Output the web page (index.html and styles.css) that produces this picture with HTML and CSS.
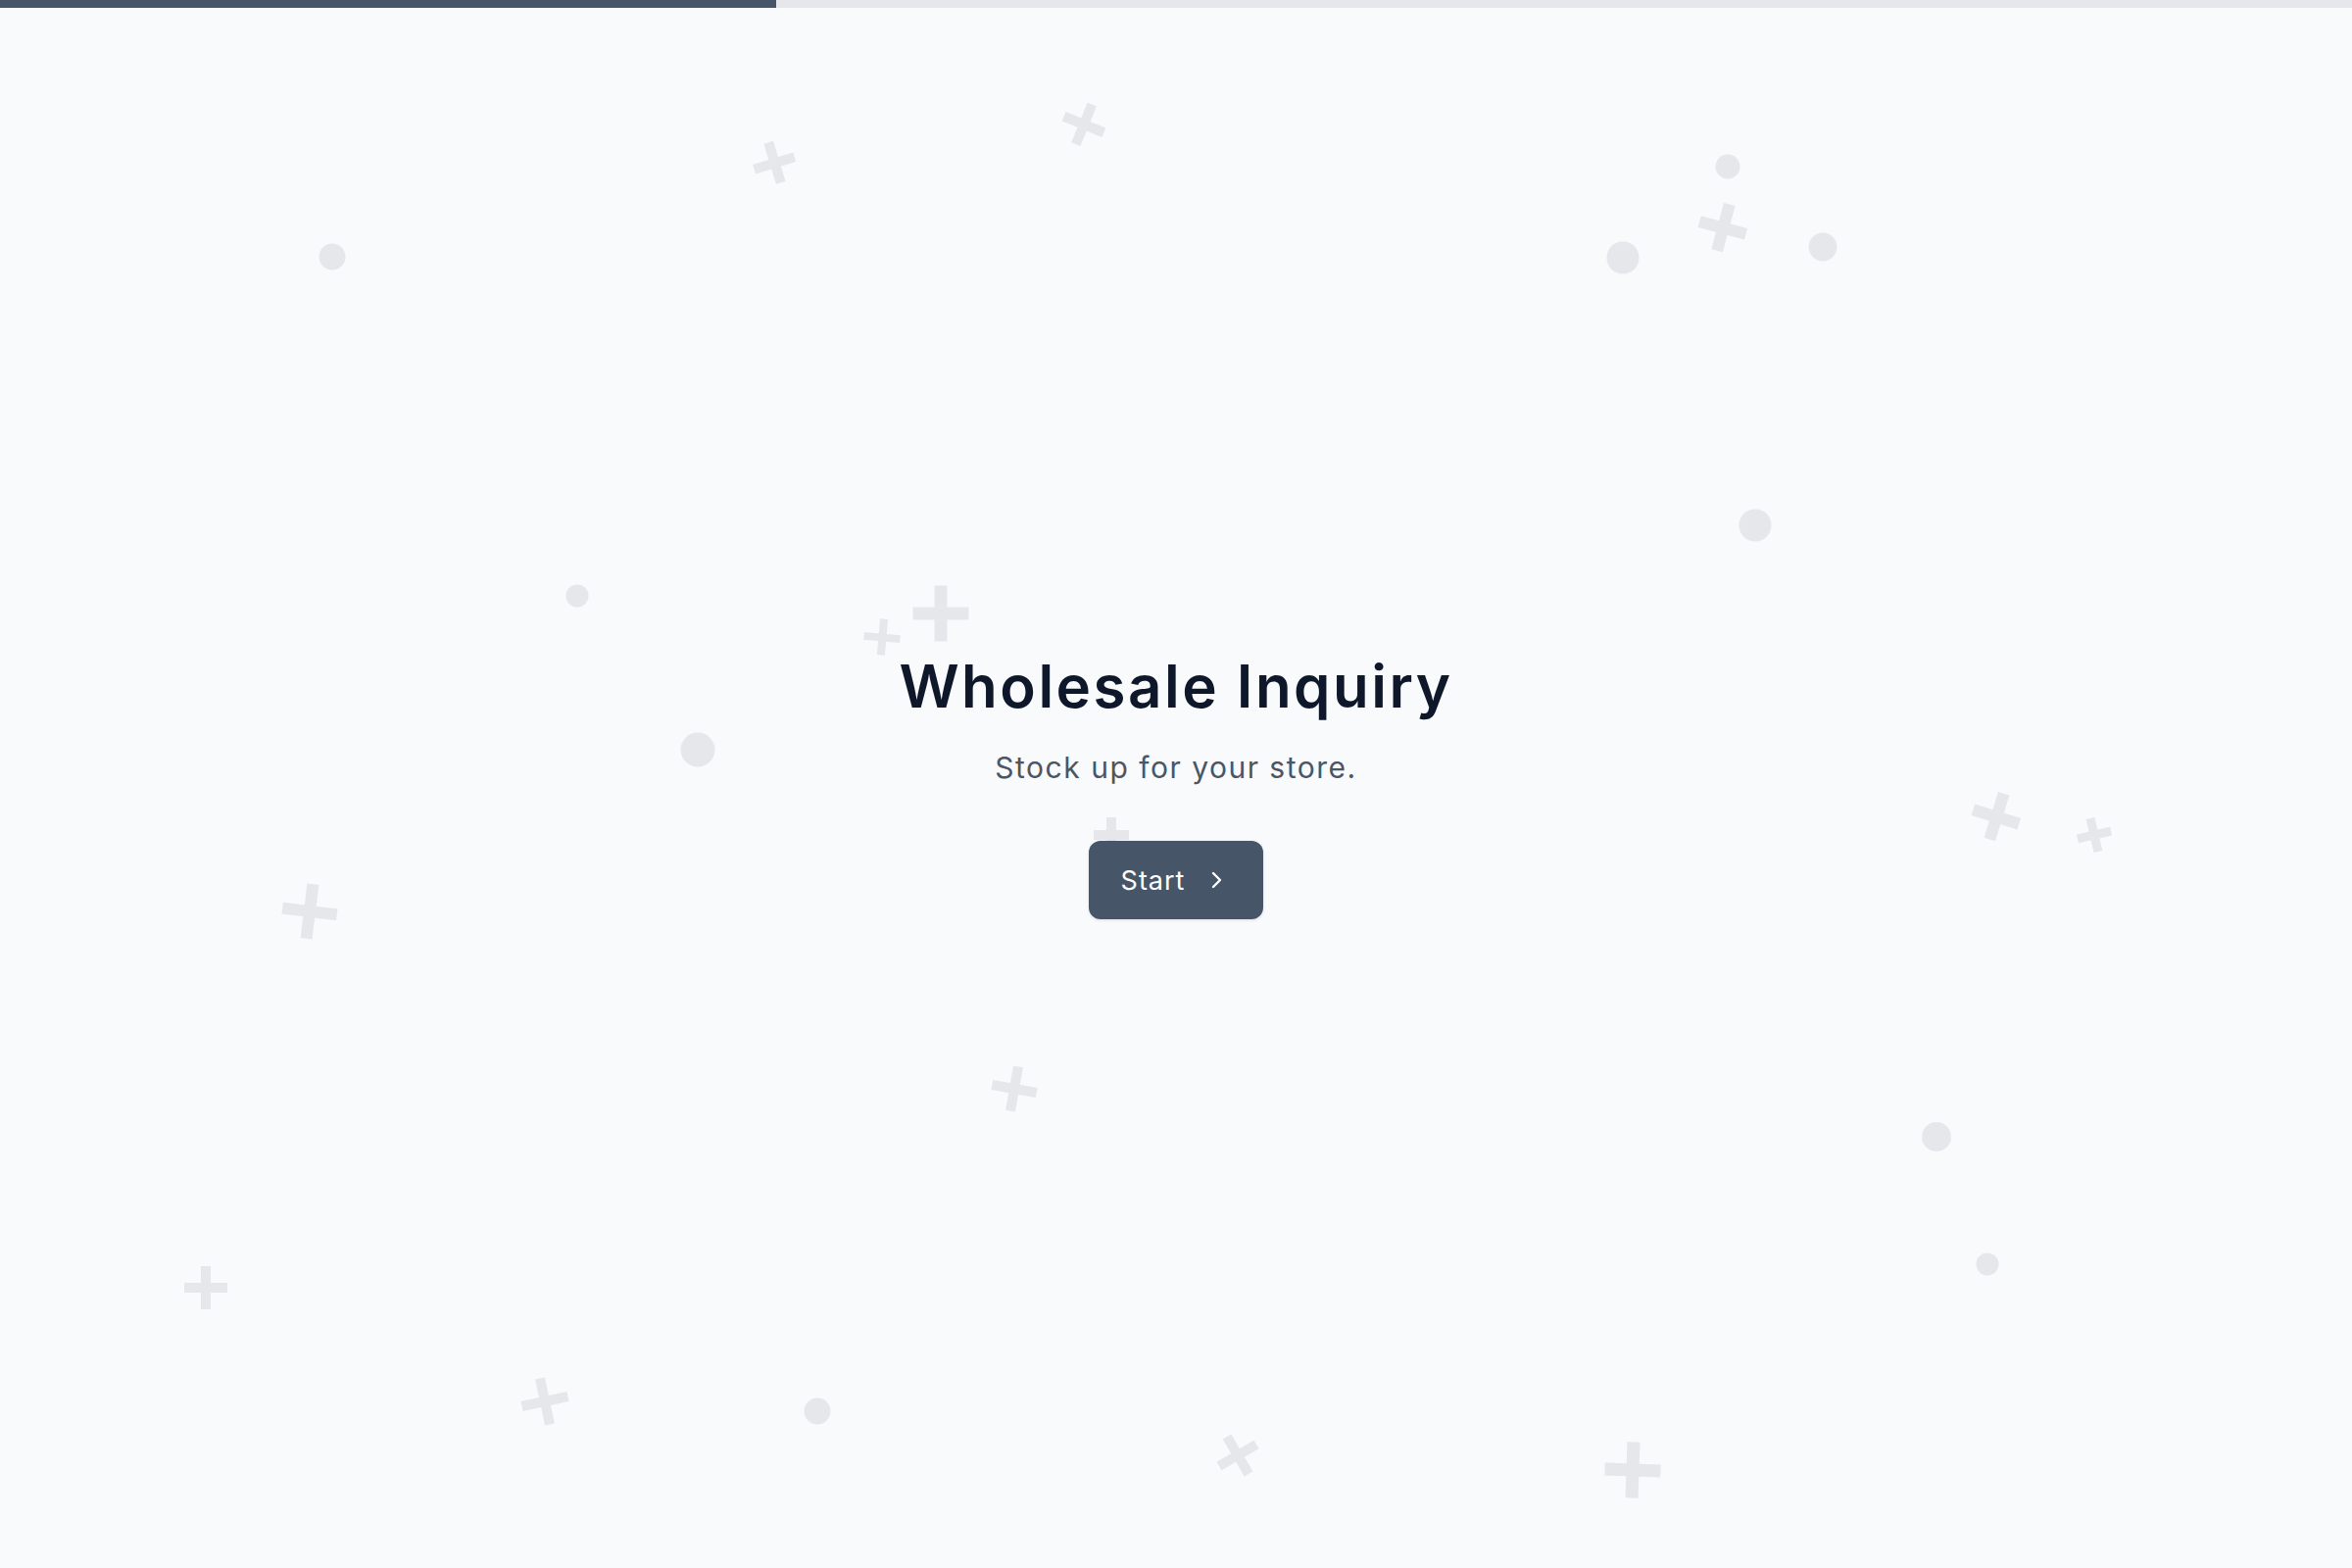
FILE: index.html
```html
<!DOCTYPE html>
<html>
<head>
    <meta charset="UTF-8">
    <title>Wholesale Inquiry</title>
    <link rel="stylesheet" href="styles.css">
</head>
<body>
    <div class="progress">
        <div class="progress-fill" style="width: 33%"></div>
    </div>

    <div class="decor" id="decor"></div>

    <main class="intro">
        <h1 class="intro-title">Wholesale Inquiry</h1>
        <p class="intro-sub">Stock up for your store.</p>
        <button class="start-btn" type="button">
            <span>Start</span>
            <svg class="start-icon" width="24" height="24" viewBox="0 0 24 24" fill="none" stroke="currentColor" stroke-width="2.4" stroke-linecap="round" stroke-linejoin="round">
                <polyline points="9 5 16 12 9 19"></polyline>
            </svg>
        </button>
    </main>

    <script>
        // background confetti: [x, y, size, bar, rotation]
        const pluses = [
            [790, 166, 43, 10, -17],
            [1106, 127, 44, 10, 22],
            [1758, 232, 49, 12, 15],
            [960, 626, 57, 13, 0],
            [900, 650, 37, 8, 5],
            [1134, 852, 36, 10, 0],
            [316, 930, 56, 12, 7],
            [1035, 1111, 46, 10, 10],
            [2037, 833, 49, 12, 17],
            [2137, 852, 35, 9, -13],
            [210, 1314, 44, 10, 0],
            [556, 1430, 48, 10, -12],
            [1263, 1485, 44, 10, -30],
            [1666, 1500, 57, 13, 2]
        ];
        // [x, y, diameter]
        const dots = [
            [339, 262, 27],
            [1763, 170, 25],
            [1656, 263, 33],
            [1860, 252, 29],
            [1791, 536, 33],
            [589, 608, 23],
            [712, 765, 35],
            [1976, 1160, 30],
            [2028, 1290, 23],
            [834, 1440, 27]
        ];

        const decor = document.getElementById('decor');
        let html = '';
        pluses.forEach(([x, y, s, t, r]) => {
            html += `<span class="plus" style="left:${x}px;top:${y}px;--s:${s}px;--t:${t}px;--r:${r}deg"></span>`;
        });
        dots.forEach(([x, y, d]) => {
            html += `<span class="dot" style="left:${x}px;top:${y}px;--d:${d}px"></span>`;
        });
        decor.innerHTML = html;
    </script>
</body>
</html>
```

FILE: styles.css
```css
html, body {
    height: 100%;
}
body {
    margin: 0;
    min-height: 100vh;
    display: flex;
    flex-direction: column;
    background: #f8fafc;
    font-family: 'Inter', 'Open Sans', sans-serif;
    color: #0f172a;
    position: relative;
    overflow: hidden;
}
.progress {
    height: 8px;
    background: #e5e7eb;
    flex-shrink: 0;
    position: relative;
    z-index: 2;
}
.progress-fill {
    height: 100%;
    background: #475569;
}
.decor {
    position: absolute;
    top: 0;
    left: 0;
    right: 0;
    bottom: 0;
    pointer-events: none;
    z-index: 0;
}
.plus {
    position: absolute;
    width: var(--s);
    height: var(--s);
    transform: translate(-50%, -50%) rotate(var(--r));
}
.plus::before,
.plus::after {
    content: '';
    position: absolute;
    background: #e5e7eb;
}
.plus::before {
    left: 0;
    right: 0;
    top: 50%;
    height: var(--t);
    margin-top: calc(var(--t) / -2);
}
.plus::after {
    top: 0;
    bottom: 0;
    left: 50%;
    width: var(--t);
    margin-left: calc(var(--t) / -2);
}
.dot {
    position: absolute;
    width: var(--d);
    height: var(--d);
    border-radius: 50%;
    background: #e5e7eb;
    transform: translate(-50%, -50%);
}
.intro {
    flex: 1;
    display: flex;
    flex-direction: column;
    align-items: center;
    justify-content: center;
    text-align: center;
    position: relative;
    z-index: 1;
}
.intro-title {
    margin: 0;
    font-size: 60px;
    line-height: 1;
    font-weight: 600;
    letter-spacing: 2.5px;
    color: #0f172a;
}
.intro-sub {
    margin: 33px 0 0;
    font-size: 30px;
    line-height: 40px;
    letter-spacing: 1.5px;
    color: #4b5563;
}
.start-btn {
    margin-top: 55px;
    height: 80px;
    padding: 0 36px 0 33px;
    display: flex;
    align-items: center;
    gap: 20px;
    border: none;
    border-radius: 12px;
    background: #475569;
    color: #fff;
    font-family: inherit;
    font-size: 27px;
    font-weight: 400;
    letter-spacing: 1px;
    cursor: pointer;
    box-shadow: 0 1px 3px rgba(15, 23, 42, 0.12);
}
.start-icon {
    display: block;
}
```
